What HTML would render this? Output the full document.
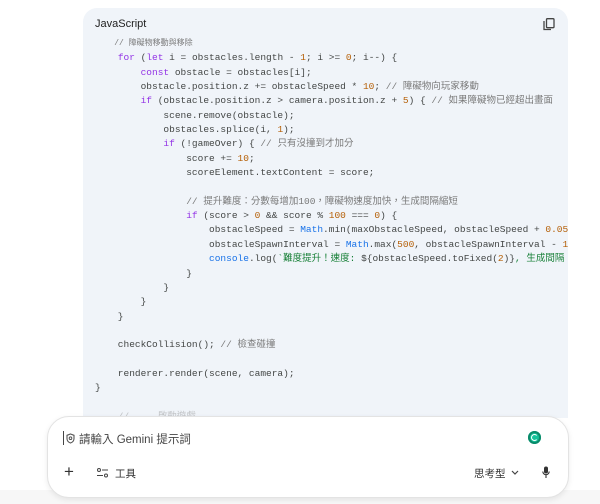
<!DOCTYPE html>
<html><head><meta charset="utf-8"><style>
body{margin:0;width:600px;height:504px;background:#fff;position:relative;overflow:hidden;font-family:"Liberation Sans","Noto Sans CJK TC",sans-serif}
.cb{position:absolute;left:83px;top:8px;width:485px;height:410px;background:#f0f4f9;border-radius:14px 14px 0 0;overflow:hidden}
.hd{position:absolute;left:12px;top:10px;font-size:11px;color:#1f1f1f}
pre{position:absolute;left:12px;top:28px;margin:0;font-family:"Liberation Mono","Noto Sans CJK TC",monospace;font-size:9.5px;line-height:14.35px;color:#444746;white-space:pre}
.k{color:#9334e6}.n{color:#b55f06}.c{color:#7a7a7a}.m{color:#1a73e8}.s{color:#188038}
.box{position:absolute;left:47px;top:416px;width:520px;height:80px;background:#fff;border:1px solid #e3e3e3;border-radius:22px;box-shadow:0 2px 6px rgba(0,0,0,.08)}
.strip{position:absolute;left:0;top:490px;width:600px;height:14px;background:#f7f7f7}
</style></head><body>
<div class="cb">
<div class="hd">JavaScript</div>
<svg style="position:absolute;left:460px;top:10px" width="12" height="13" viewBox="0 0 12 13"><rect x="3.5" y="0.7" width="7.5" height="9" rx="1" fill="none" stroke="#444" stroke-width="1.3"/><path d="M1 3v8.5h7" fill="none" stroke="#444" stroke-width="1.3"/></svg>
<pre><span class="c" style="font-size:8px">    // 障礙物移動與移除</span>
    <span class="k">for</span> (<span class="k">let</span> i = obstacles.length - <span class="n">1</span>; i &gt;= <span class="n">0</span>; i--) {
        <span class="k">const</span> obstacle = obstacles[i];
        obstacle.position.z += obstacleSpeed * <span class="n">10</span>; <span class="c">// 障礙物向玩家移動</span>
        <span class="k">if</span> (obstacle.position.z &gt; camera.position.z + <span class="n">5</span>) { <span class="c">// 如果障礙物已經超出畫面</span>
            scene.remove(obstacle);
            obstacles.splice(i, <span class="n">1</span>);
            <span class="k">if</span> (!gameOver) { <span class="c">// 只有沒撞到才加分</span>
                score += <span class="n">10</span>;
                scoreElement.textContent = score;

                <span class="c">// 提升難度：分數每增加100，障礙物速度加快，生成間隔縮短</span>
                <span class="k">if</span> (score &gt; <span class="n">0</span> &amp;&amp; score % <span class="n">100</span> === <span class="n">0</span>) {
                    obstacleSpeed = <span class="m">Math</span>.min(maxObstacleSpeed, obstacleSpeed + <span class="n">0.05</span>);
                    obstacleSpawnInterval = <span class="m">Math</span>.max(<span class="n">500</span>, obstacleSpawnInterval - <span class="n">100</span>);
                    <span class="m">console</span>.log(<span class="s">`難度提升！速度: </span>${obstacleSpeed.toFixed(<span class="n">2</span>)}<span class="s">, 生成間隔</span>
                }
            }
        }
    }

    checkCollision(); <span class="c">// 檢查碰撞</span>

    renderer.render(scene, camera);
}

<span class="c" style="opacity:.4">    //     啟動遊戲</span></pre>
</div>
<div class="strip"></div>
<div class="box">
<div style="position:absolute;left:15px;top:14px;width:1px;height:14px;background:#444"></div>
<svg style="position:absolute;left:18px;top:16px" width="9" height="11" viewBox="0 0 9 11"><path d="M4.5 1L8 2.3v3.2c0 2.2-1.5 3.8-3.5 4.5C2.5 9.3 1 7.7 1 5.5V2.3z" fill="none" stroke="#555" stroke-width="1.1"/><circle cx="4.5" cy="5.2" r="1.3" fill="none" stroke="#555" stroke-width="1"/></svg>
<div style="position:absolute;left:31px;top:14px;font-size:11.5px;color:#444">請輸入 Gemini 提示詞</div>
<div style="position:absolute;left:480px;top:14px;width:13px;height:13px;border-radius:50%;background:#15c39a;box-shadow:inset 0 0 0 2px #0b8a6a"><div style="position:absolute;left:3px;top:3px;width:5px;height:5px;border:1.5px solid #fff;border-radius:50%;border-right-color:transparent"></div></div>
<div style="position:absolute;left:16px;top:45px;font-size:17px;color:#333;line-height:20px">+</div>
<svg style="position:absolute;left:49px;top:51px" width="11" height="10" viewBox="0 0 11 10"><circle cx="2" cy="2" r="1.5" fill="none" stroke="#444"/><path d="M5 2h6M0 7.5h6" stroke="#444"/><circle cx="9" cy="7.5" r="1.5" fill="none" stroke="#444"/></svg>
<div style="position:absolute;left:67px;top:49px;font-size:10.5px;color:#333">工具</div>
<div style="position:absolute;left:426px;top:49px;font-size:10.5px;color:#333">思考型</div>
<svg style="position:absolute;left:463px;top:53px" width="8" height="5" viewBox="0 0 8 5"><path d="M1 1l3 3 3-3" fill="none" stroke="#444" stroke-width="1.2"/></svg>
<svg style="position:absolute;left:494px;top:49px" width="8" height="13" viewBox="0 0 8 13"><rect x="2" y="0.5" width="4" height="7" rx="2" fill="#333"/><path d="M0.8 5.5a3.2 3.2 0 0 0 6.4 0M4 9v3" fill="none" stroke="#333" stroke-width="1.1"/></svg>
</div>
</body></html>
